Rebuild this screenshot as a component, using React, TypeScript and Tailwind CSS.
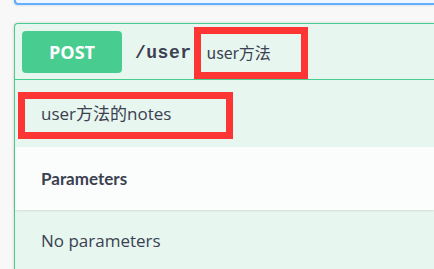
export default function App() {
  const sans = { fontFamily: '"Open Sans", "Noto Sans CJK SC", sans-serif' };
  return (
    <div className="h-[269px] w-[434px] overflow-hidden bg-[#f8f8f8] pl-[14px] text-[#3b4151]">
      {/* previous operation block, cut off at the top */}
      <div className="-mt-[20px] h-[25px] rounded-bl-[4px] border-b-2 border-l-2 border-[#61affe] bg-[#eef6ff] shadow-[0_0_3px_rgba(0,0,0,0.19)]" />

      <div className="mt-[18px] rounded-tl-[4px] border border-r-0 border-[#49cc90] bg-[#e7f6ef] shadow-[0_0_3px_rgba(0,0,0,0.19)]">
        {/* summary */}
        <div className="flex h-[56px] items-start border-b border-[#49cc90] pl-[7px]">
          <div
            className="mt-[7px] flex h-[42px] w-[100px] items-center justify-center rounded-[4px] bg-[#49cc90] text-[18px] font-bold text-white"
            style={{ fontFamily: '"Open Sans", sans-serif' }}
          >
            POST
          </div>
          <span
            className="ml-[13px] self-center pt-[3px] text-[18px] font-bold tracking-[0.5px]"
            style={{ fontFamily: '"Liberation Mono", monospace' }}
          >
            /user
          </span>
          <div
            className="ml-[2px] mt-[3px] flex h-[52px] w-[114px] items-center border-[7px] border-[#fd3535] pb-[3px] pl-[6px] text-[16px]"
            style={{ fontFamily: '"Noto Sans CJK SC", sans-serif' }}
          >
            user方法
          </div>
        </div>

        {/* description */}
        <div className="pb-[8px] pl-[3px] pt-[12px]">
          <div
            className="flex h-[47px] w-[215px] items-center border-[7px] border-[#fd3535] pb-[3px] pl-[16px] text-[17px]"
            style={sans}
          >
            user方法的notes
          </div>
        </div>

        {/* parameters header */}
        <div className="flex h-[63px] items-center bg-[#fbfdfc] pl-[26px] shadow-[0_1px_2px_rgba(0,0,0,0.1)]">
          <h4 className="text-[17px] font-bold" style={{ fontFamily: 'Lato, sans-serif' }}>
            Parameters
          </h4>
        </div>

        <div className="pl-[26px] pt-[18px] pb-[20px]">
          <p className="text-[17px]" style={sans}>
            No parameters
          </p>
        </div>
      </div>
    </div>
  );
}
